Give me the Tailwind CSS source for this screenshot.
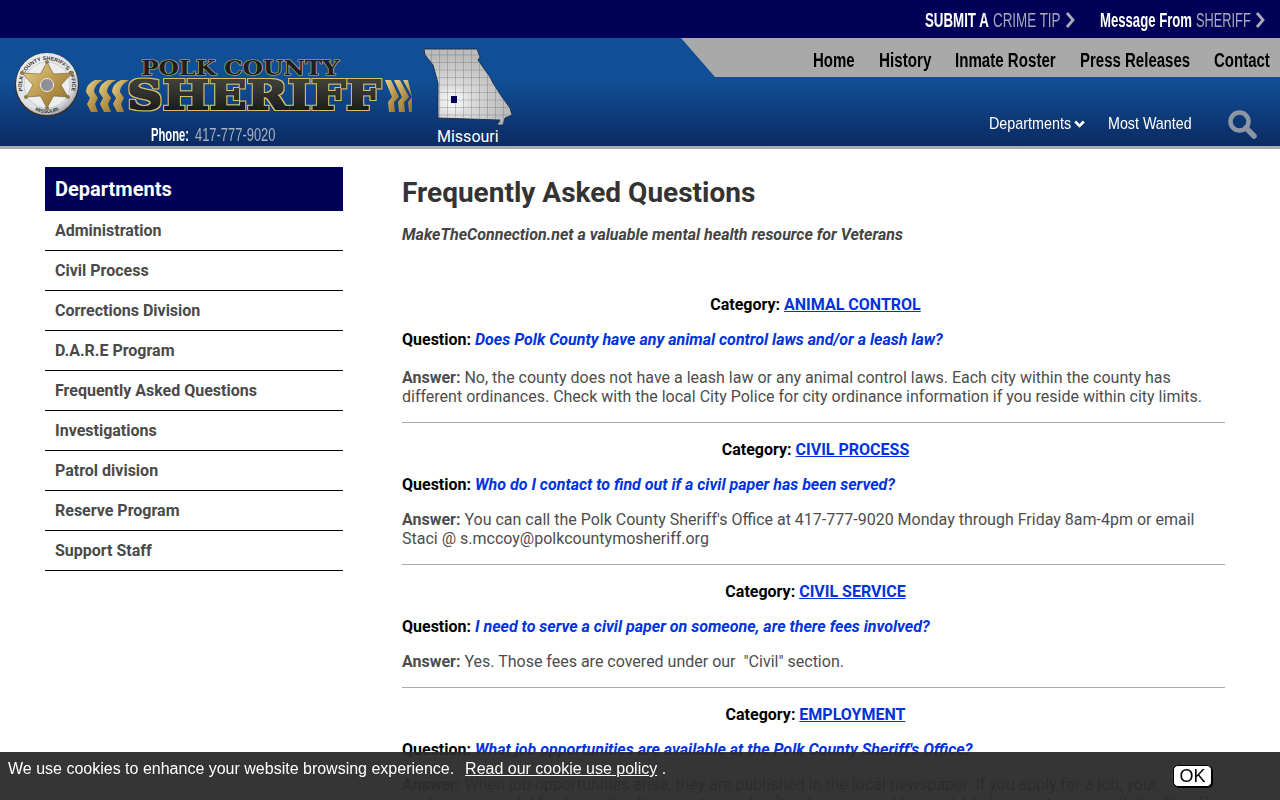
<!DOCTYPE html>
<html lang="en">
<head>
  <meta charset="UTF-8">
  <title>Frequently Asked Questions</title>
  <script src="https://cdn.jsdelivr.net/npm/@tailwindcss/browser@4"></script>
</head>
<body class="bg-white font-['Roboto',sans-serif] text-[16px] text-[#4d4d4d]">
  <!-- Top bar -->
  <div class="h-[38px] bg-[#000058] flex justify-end items-center pt-[1px] pr-[15px] gap-[25px] font-['Liberation_Sans',sans-serif] text-[20px] text-white whitespace-nowrap">
    <a href="#" class="flex items-center gap-[5px]">
      <span class="w-[63px] font-bold"><span class="inline-block origin-left scale-x-[.665]">SUBMIT A</span></span>
      <span class="w-[67px] text-[#a9a9b9]"><span class="inline-block origin-left scale-x-[.67]">CRIME TIP</span></span>
      <svg width="10" height="16" viewBox="0 0 10 16"><path d="M2 1l6 7-6 7" fill="none" stroke="#a9a9b9" stroke-width="2.8"/></svg>
    </a>
    <a href="#" class="flex items-center gap-[4px]">
      <span class="w-[92px] font-bold"><span class="inline-block origin-left scale-x-[.657]">Message From</span></span>
      <span class="w-[55px] text-[#a9a9b9]"><span class="inline-block origin-left scale-x-[.64]">SHERIFF</span></span>
      <svg width="10" height="16" viewBox="0 0 10 16"><path d="M2 1l6 7-6 7" fill="none" stroke="#a9a9b9" stroke-width="2.8"/></svg>
    </a>
  </div>

  <!-- Header -->
  <header class="h-[111px] flex justify-between bg-gradient-to-b from-[#104f96] from-40% to-[#0b2a62] border-b-[3px] border-[#a9acac]">
    <div class="flex">
      <div class="ml-[14px] mt-[14px] w-[402px]">
        <!-- Logo -->
        <svg class="block" width="402" height="72" viewBox="0 0 402 72">
          <defs>
            <linearGradient id="gold" x1="0" y1="0" x2="1" y2="1"><stop offset="0" stop-color="#e9d48c"/><stop offset=".55" stop-color="#b8954a"/><stop offset="1" stop-color="#8a6a2a"/></linearGradient>
            <linearGradient id="dark" x1="0" y1="0" x2="0" y2="1"><stop offset="0" stop-color="#4a4a44"/><stop offset="1" stop-color="#121210"/></linearGradient>
            <radialGradient id="disc" cx=".42" cy=".38" r=".7"><stop offset="0" stop-color="#fff"/><stop offset=".75" stop-color="#dcdee0"/><stop offset="1" stop-color="#8a8c90"/></radialGradient>
            <path id="ringTop" d="M15.3 50.7A25 25 0 1 1 50.7 50.7"/>
            <path id="ringBottom" d="M17 56A28 28 0 0 0 49 56"/>
            <filter id="slab" x="-5%" y="-15%" width="110%" height="130%">
              <feMorphology in="SourceGraphic" operator="dilate" radius="1 .5" result="fat"/>
              <feMorphology in="SourceAlpha" operator="dilate" radius="2 1.5" result="outer"/>
              <feFlood flood-color="#d8bd6c"/>
              <feComposite in2="outer" operator="in" result="rim"/>
              <feMerge><feMergeNode in="rim"/><feMergeNode in="fat"/></feMerge>
            </filter>
          </defs>
          <circle cx="33" cy="33" r="32" fill="#333"/>
          <circle cx="33" cy="32" r="31" fill="url(#disc)"/>
          <circle cx="33" cy="33" r="23" fill="#eceeee" stroke="#aaa" stroke-width=".5"/>
          <text font-family="Liberation Sans" font-weight="700" font-size="5.4" fill="#333"><textPath href="#ringTop" startOffset="50%" text-anchor="middle">POLK COUNTY SHERIFF'S OFFICE</textPath></text>
          <text font-family="Liberation Sans" font-weight="700" font-size="5" fill="#333"><textPath href="#ringBottom" startOffset="50%" text-anchor="middle">MISSOURI</textPath></text>
          <polygon points="33,10 39.5,22 58,21 47,33 54,45 39.5,44 33,56 26.5,44 12,45 19,33 8,21 26.5,22" fill="url(#gold)" stroke="#5c4a1c" stroke-width=".5"/>
          <g fill="#8a7a4a"><circle cx="33" cy="10" r="2"/><circle cx="58" cy="21" r="2"/><circle cx="54" cy="45" r="2"/><circle cx="33" cy="56" r="2"/><circle cx="12" cy="45" r="2"/><circle cx="8" cy="21" r="2"/></g>
          <circle cx="33" cy="33" r="6.5" fill="#8d9096" stroke="#eee"/>
          <!-- left swooshes -->
          <g fill="url(#gold)">
            <path d="M81 28Q72 32 72 40L76 46 73 52 77 60H84L81 52 84 46 80 40Q80 33 89 28z"/>
            <path d="M94 28Q85 32 85 40L89 46 86 52 90 60H97L94 52 97 46 93 40Q93 33 102 28z"/>
            <path d="M107 28Q98 32 98 40L102 46 99 52 103 60H110L107 52 110 46 106 40Q106 33 115 28z"/>
          </g>
          <!-- right swooshes -->
          <g fill="url(#gold)">
            <path d="M371 28L378 45 374 50 375 60H381L380 50 385 45 377 28z"/>
            <path d="M380 28L388 45 384 50 385 60H391L390 50 395 45 386 28z"/>
            <path d="M389 28L398 45 394 50 395 60H398V45L394 28z"/>
          </g>
          <text x="226" y="23" text-anchor="middle" textLength="198" lengthAdjust="spacingAndGlyphs" font-family="DejaVu Serif" font-weight="700" font-size="20" fill="#1e1e1c" stroke="#c9b26a" stroke-width="1.2" paint-order="stroke">POLK COUNTY</text>
          <text x="240" y="57" text-anchor="middle" textLength="254" lengthAdjust="spacingAndGlyphs" font-family="DejaVu Serif" font-weight="700" font-size="40" fill="url(#dark)" filter="url(#slab)">SHERIFF</text>
        </svg>
        <p class="flex gap-[6px] pl-[137px] font-['Liberation_Sans',sans-serif] text-[19px] leading-[22px] whitespace-nowrap text-[#a9b0c0]">
          <span class="w-[38px] font-bold text-white"><span class="inline-block origin-left scale-x-[.59]">Phone:</span></span>
          <span class="w-[80px]"><span class="inline-block origin-left scale-x-[.68]">417-777-9020</span></span>
        </p>
      </div>
      <div class="ml-[7px] mt-[9px] w-[90px]">
        <!-- Missouri map -->
        <svg class="block" width="90" height="80" viewBox="0 0 90 80">
          <defs>
            <radialGradient id="mo" cx=".33" cy=".68" r=".6"><stop offset="0" stop-color="#fff"/><stop offset=".35" stop-color="#dcdcdc"/><stop offset="1" stop-color="#bbb"/></radialGradient>
            <pattern id="counties" width="8" height="7.5" patternUnits="userSpaceOnUse"><path d="M8 0H0V7.5" fill="none" stroke="#59616b" stroke-width=".6"/></pattern>
          </defs>
          <path d="M1 2H54L57 10 55 13 67 30 70 36 79 50 87 61 89 68 82 71 80 78H74L77 73 15 71V36L10 18 2 8z" fill="url(#mo)" stroke="#1d2a44" stroke-width=".9"/>
          <path d="M1 2H54L57 10 55 13 67 30 70 36 79 50 87 61 89 68 82 71 80 78H74L77 73 15 71V36L10 18 2 8z" fill="url(#counties)"/>
          <rect x="28" y="49" width="6" height="7" fill="#000058"/>
        </svg>
        <p class="pl-[14px] text-[16px] leading-[20px] text-white">Missouri</p>
      </div>
    </div>

    <div class="w-[599px] flex flex-col">
      <nav class="h-[39px] pt-[5px] bg-[#a9a9a9] [clip-path:polygon(0_0,100%_0,100%_100%,34px_100%)] flex justify-end items-center gap-[24px] pr-[10px] font-['Liberation_Sans',sans-serif] font-bold text-[20px] text-black whitespace-nowrap">
        <a href="#" class="w-[42px]"><span class="inline-block origin-left scale-x-[.75]">Home</span></a>
        <a href="#" class="w-[52px]"><span class="inline-block origin-left scale-x-[.76]">History</span></a>
        <a href="#" class="w-[101px]"><span class="inline-block origin-left scale-x-[.755]">Inmate Roster</span></a>
        <a href="#" class="w-[110px]"><span class="inline-block origin-left scale-x-[.75]">Press Releases</span></a>
        <a href="#" class="w-[56px]"><span class="inline-block origin-left scale-x-[.75]">Contact</span></a>
      </nav>
      <div class="flex justify-end items-center gap-[23px] mt-[32px] pr-[23px] font-['Liberation_Sans',sans-serif] text-[17px] text-white whitespace-nowrap">
        <a href="#" class="flex items-center gap-[3px]">
          <span class="w-[82px]"><span class="inline-block origin-left scale-x-[.845]">Departments</span></span>
          <svg width="11" height="8" viewBox="0 0 11 8"><path d="M1.2 1.5l4.3 4.3 4.3-4.3" fill="none" stroke="#fff" stroke-width="2.6"/></svg>
        </a>
        <a href="#" class="w-[83px]"><span class="inline-block origin-left scale-x-[.84]">Most Wanted</span></a>
        <svg class="ml-[13px]" width="30" height="30" viewBox="0 0 30 30"><circle cx="12.5" cy="12.5" r="9" fill="none" stroke="#8d97a3" stroke-width="4.5"/><path d="M19 19l8 8" stroke="#8d97a3" stroke-width="5.5" stroke-linecap="round"/></svg>
      </div>
    </div>
  </header>

  <div class="flex items-start pl-[45px] pr-[55px]">
    <!-- Sidebar -->
    <aside class="w-[298px] mt-[18px] shrink-0">
      <h2 class="h-[44px] px-[10px] flex items-center bg-[#000058] text-white font-bold text-[20px]">Departments</h2>
      <ul class="font-bold text-[#4a4a4a]">
        <li class="h-[40px] px-[10px] flex items-center border-b border-black">Administration</li>
        <li class="h-[40px] px-[10px] flex items-center border-b border-black">Civil Process</li>
        <li class="h-[40px] px-[10px] flex items-center border-b border-black">Corrections Division</li>
        <li class="h-[40px] px-[10px] flex items-center border-b border-black">D.A.R.E Program</li>
        <li class="h-[40px] px-[10px] flex items-center border-b border-black">Frequently Asked Questions</li>
        <li class="h-[40px] px-[10px] flex items-center border-b border-black">Investigations</li>
        <li class="h-[40px] px-[10px] flex items-center border-b border-black">Patrol division</li>
        <li class="h-[40px] px-[10px] flex items-center border-b border-black">Reserve Program</li>
        <li class="h-[40px] px-[10px] flex items-center border-b border-black">Support Staff</li>
      </ul>
    </aside>

    <!-- Main -->
    <main class="ml-[59px] flex-1 leading-[19px]">
      <h1 class="mt-[27px] text-[28px] leading-[33px] font-bold text-[#333]">Frequently Asked Questions</h1>
      <p class="mt-[16px] font-bold italic text-[#444]">MakeTheConnection.net a valuable mental health resource for Veterans</p>

      <section class="mt-[51px] pb-[16px] border-b border-[#aaa]">
        <p class="pl-[4px] text-center font-bold text-black">Category: <a href="#" class="text-[#0033dd] underline">ANIMAL CONTROL</a></p>
        <p class="mt-[16px] font-bold text-black">Question: <a href="#" class="text-[#0033dd] italic">Does Polk County have any animal control laws and/or a leash law?</a></p>
        <p class="mt-[19px]"><b class="font-bold">Answer:</b> No, the county does not have a leash law or any animal control laws. Each city within the county has different ordinances. Check with the local City Police for city ordinance information if you reside within city limits.</p>
      </section>
      <section class="mt-[17px] pb-[16px] border-b border-[#aaa]">
        <p class="pl-[4px] text-center font-bold text-black">Category: <a href="#" class="text-[#0033dd] underline">CIVIL PROCESS</a></p>
        <p class="mt-[16px] font-bold text-black">Question: <a href="#" class="text-[#0033dd] italic">Who do I contact to find out if a civil paper has been served?</a></p>
        <p class="mt-[16px]"><b class="font-bold">Answer:</b> You can call the Polk County Sheriff's Office at 417-777-9020 Monday through Friday 8am-4pm or email Staci @ s.mccoy@polkcountymosheriff.org</p>
      </section>
      <section class="mt-[17px] pb-[16px] border-b border-[#aaa]">
        <p class="pl-[4px] text-center font-bold text-black">Category: <a href="#" class="text-[#0033dd] underline">CIVIL SERVICE</a></p>
        <p class="mt-[16px] font-bold text-black">Question: <a href="#" class="text-[#0033dd] italic">I need to serve a civil paper on someone, are there fees involved?</a></p>
        <p class="mt-[16px]"><b class="font-bold">Answer:</b> Yes. Those fees are covered under our &nbsp;"Civil" section.</p>
      </section>
      <section class="mt-[17px] pb-[17px]">
        <p class="pl-[4px] text-center font-bold text-black">Category: <a href="#" class="text-[#0033dd] underline">EMPLOYMENT</a></p>
        <p class="mt-[16px] font-bold text-black">Question: <a href="#" class="text-[#0033dd] italic">What job opportunities are available at the Polk County Sheriff's Office?</a></p>
        <p class="mt-[16px]"><b class="font-bold">Answer:</b> When job opportunities arise, they are published in the local newspaper. If you apply for a job, your application is valid for 6 months. You must reapply after that time and be available for an interview with the Sheriff.</p>
      </section>
    </main>
  </div>

  <!-- Cookie bar -->
  <div class="fixed inset-x-0 bottom-0 h-[48px] bg-[#2a2a2a]/95 flex justify-between items-start font-['Liberation_Sans',sans-serif] text-white pl-[8px] pr-[68px]">
    <p class="mt-[5px]">We use cookies to enhance your website browsing experience. &nbsp;<a href="#" class="ml-[2px] underline">Read our cookie use policy</a> .</p>
    <button class="mt-[13px] w-[39px] h-[22px] bg-white text-black rounded-[5px] border border-black shadow-[1px_1px_0_#000] flex items-center justify-center text-[18px] leading-none">OK</button>
  </div>
</body>
</html>
